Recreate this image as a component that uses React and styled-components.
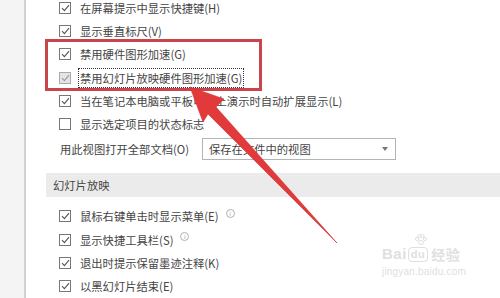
import React from "react";
import styled, { createGlobalStyle } from "styled-components";

const Global = createGlobalStyle`
  html, body { margin: 0; padding: 0; background: #fff; }
  body { width: 500px; height: 298px; overflow: hidden; font-family: "Noto Sans CJK SC", "Noto Sans", sans-serif; }
`;

const Page = styled.div`
  position: relative;
  width: 500px;
  height: 298px;
  overflow: hidden;
  display: flex;
  background: #fff;
`;

const Nav = styled.div`
  width: 24px;
  flex: none;
  background: #f4f4f4;
  border-right: 2px solid #d2d2d2;
`;

const Content = styled.div`
  flex: 1;
  display: flex;
  flex-direction: column;
  margin-top: -4px;
  padding-left: 20px;
  color: #444;
  font-size: 11.3px;
`;

const Row = styled.div`
  height: 24px;
  display: flex;
  align-items: center;
  padding-left: 13px;
  gap: 7px;
  white-space: nowrap;
`;

const Box = styled.span`
  width: 10px;
  height: 10px;
  flex: none;
  border: 1px solid ${(p) => (p.$disabled ? "#aaa" : "#777")};
  background: ${(p) => (p.$disabled ? "#e4e4e4" : "#fff")};
  display: flex;
  align-items: center;
  justify-content: center;
  svg { display: block; }
`;

const Label = styled.span`
  padding: 1px 1px;
  border: 1px dotted ${(p) => (p.$focus ? "#333" : "transparent")};
`;

const Info = styled.span`
  width: 7px;
  height: 7px;
  border: 1px solid #b0b0b0;
  border-radius: 50%;
  color: #a0a0a0;
  font-size: 6px;
  line-height: 7px;
  text-align: center;
  margin-left: -2px;
  margin-top: -6px;
  font-family: "DejaVu Sans", sans-serif;
`;

const SelectRow = styled.div`
  height: 26px;
  display: flex;
  align-items: center;
  padding-left: 14px;
  white-space: nowrap;
`;

const SelectLabel = styled.span`
  width: 142px;
  flex: none;
`;

const Select = styled.div`
  width: 179px;
  height: 20px;
  border: 1px solid #b4b4b4;
  display: flex;
  align-items: center;
  justify-content: space-between;
  padding: 0 7px 0 6px;
  box-sizing: content-box;
`;

const Caret = styled.span`
  width: 0;
  height: 0;
  border-left: 3.5px solid transparent;
  border-right: 3.5px solid transparent;
  border-top: 4px solid #777;
`;

const Section = styled.div`
  margin-top: 12px;
  height: 24px;
  background: #ebebeb;
  display: flex;
  align-items: center;
  padding-left: 7px;
  color: #444;
  margin-bottom: 8px;
`;

const Highlight = styled.div`
  position: absolute;
  left: 45px;
  top: 39px;
  width: 211px;
  height: 46px;
  border: 3px solid #c9454b;
  pointer-events: none;
`;

const Overlay = styled.svg`
  position: absolute;
  left: 0;
  top: 0;
  pointer-events: none;
`;

const Watermark = styled.div`
  position: absolute;
  left: 382px;
  top: 246px;
  display: flex;
  flex-direction: column;
  align-items: flex-start;
  color: #e0e0e0;
  font-family: "Liberation Sans", Arial, sans-serif;
`;

const Brand = styled.div`
  display: flex;
  align-items: flex-end;
  font-size: 15px;
  font-weight: bold;
  letter-spacing: 0.5px;
  line-height: 16px;
  gap: 1px;
`;

const Du = styled.span`
  position: relative;
  border: 1.5px solid #e0e0e0;
  border-radius: 4px;
  font-size: 11px;
  line-height: 11px;
  padding: 1px 2px;
`;

const Paw = styled.svg`
  position: absolute;
  left: 6px;
  top: -14px;
`;

const Jy = styled.span`
  font-family: "Noto Sans CJK SC", sans-serif;
  font-size: 14px;
  margin-left: 2px;
`;

const Url = styled.div`
  font-size: 10px;
  margin-top: 4px;
  letter-spacing: 0.2px;
`;

const Check = ({ disabled }) => (
  <Box $disabled={disabled}>
    <svg width="9" height="8" viewBox="0 0 9 8">
      <path d="M1 4.2 L3.4 6.6 L8 1.2" fill="none" stroke={disabled ? "#9a9a9a" : "#555"} strokeWidth="1.1" />
    </svg>
  </Box>
);

const Empty = () => <Box />;

const items = [
  { t: "在屏幕提示中显示快捷键(H)", c: true },
  { t: "显示垂直标尺(V)", c: true },
  { t: "禁用硬件图形加速(G)", c: true },
  { t: "禁用幻灯片放映硬件图形加速(G)", c: true, d: true, f: true },
  { t: "当在笔记本电脑或平板电脑上演示时自动扩展显示(L)", c: true },
  { t: "显示选定项目的状态标志", c: false },
];

const show = [
  { t: "鼠标右键单击时显示菜单(E)", i: true },
  { t: "显示快捷工具栏(S)", i: true },
  { t: "退出时提示保留墨迹注释(K)" },
  { t: "以黑幻灯片结束(E)" },
];

export default function App() {
  return (
    <Page>
      <Global />
      <Nav />
      <Content>
        {items.map((it) => (
          <Row key={it.t}>
            {it.c ? <Check disabled={it.d} /> : <Empty />}
            <Label $focus={it.f}>{it.t}</Label>
          </Row>
        ))}
        <SelectRow>
          <SelectLabel>用此视图打开全部文档(O)</SelectLabel>
          <Select>
            <span>保存在文件中的视图</span>
            <Caret />
          </Select>
        </SelectRow>
        <Section>幻灯片放映</Section>
        {show.map((it) => (
          <Row key={it.t}>
            <Check />
            <Label>{it.t}</Label>
            {it.i && <Info>i</Info>}
          </Row>
        ))}
      </Content>
      <Highlight />
      <Overlay width="500" height="298" viewBox="0 0 500 298">
        <path
          d="M190 87 L224 99 L216 107 L337 243 L208 114 L203 122 Z"
          fill="#e23a3a"
          stroke="#d23030"
          strokeWidth="0.6"
          strokeLinejoin="round"
        />
      </Overlay>
      <Watermark>
        <Brand>
          <span>Bai</span>
          <Du>
            du
            <Paw width="12" height="11" viewBox="0 0 12 11">
              <circle cx="2" cy="5" r="1.6" fill="none" stroke="#e0e0e0" />
              <circle cx="4.5" cy="2" r="1.6" fill="none" stroke="#e0e0e0" />
              <circle cx="7.5" cy="2" r="1.6" fill="none" stroke="#e0e0e0" />
              <circle cx="10" cy="5" r="1.6" fill="none" stroke="#e0e0e0" />
              <ellipse cx="6" cy="8.5" rx="2.5" ry="2" fill="none" stroke="#e0e0e0" />
            </Paw>
          </Du>
          <Jy>经验</Jy>
        </Brand>
        <Url>jingyan.baidu.com</Url>
      </Watermark>
    </Page>
  );
}
